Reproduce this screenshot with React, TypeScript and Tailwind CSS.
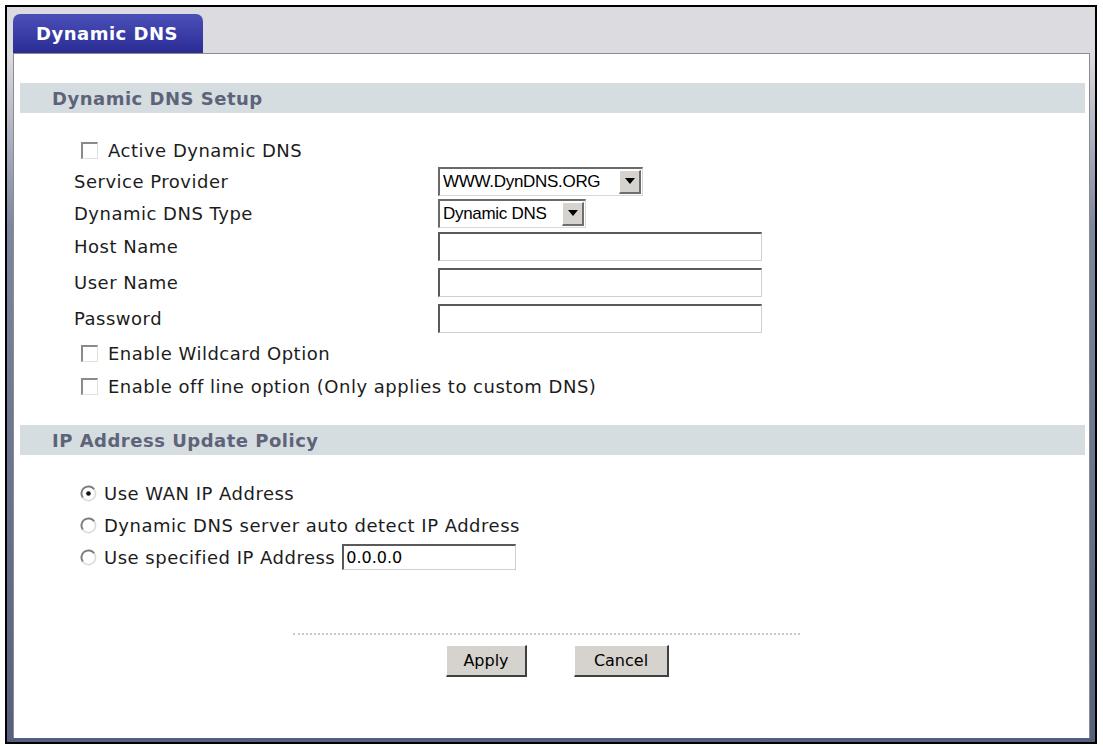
import { useState } from 'react'

const labelFont = "font-['DejaVu_Sans','Verdana',sans-serif]"
const arialFont = "font-['Liberation_Sans','Arial',sans-serif]"

function Check({ checked, onChange }: { checked: boolean; onChange: () => void }) {
  return (
    <button
      type="button"
      onClick={onChange}
      className="flex h-[17px] w-[17px] shrink-0 items-center justify-center border-t-2 border-l-2 border-b border-r border-t-[#8a8a8a] border-l-[#8a8a8a] border-b-[#e0e0e0] border-r-[#e0e0e0] bg-white"
    >
      {checked && <span className="text-[13px] leading-none text-black">✓</span>}
    </button>
  )
}

function Radio({ checked, onChange }: { checked: boolean; onChange: () => void }) {
  return (
    <button type="button" onClick={onChange} className="h-[17px] w-[17px] shrink-0">
      <svg width="17" height="17" viewBox="0 0 17 17">
        <path d="M14.2 4.3A7 7 0 0 0 2.8 12.7" fill="none" stroke="#7c7c7c" strokeWidth="2" />
        <path d="M2.8 12.7A7 7 0 0 0 14.2 4.3" fill="none" stroke="#dadada" strokeWidth="1.6" />
        <circle cx="8.5" cy="8.5" r="5.6" fill="#fff" />
        {checked && <circle cx="8.5" cy="8.5" r="2.3" fill="#111" />}
      </svg>
    </button>
  )
}

function SelectBox({ value, width }: { value: string; width: string }) {
  return (
    <div
      className={`flex h-[29px] items-stretch border-t-2 border-l-2 border-b border-r border-t-[#6a6a6a] border-l-[#6a6a6a] border-b-[#d8d8d8] border-r-[#d8d8d8] bg-white ${width}`}
    >
      <span className={`flex-1 pl-[3px] text-[17px] leading-[26px] tracking-[-0.3px] text-black ${arialFont}`}>{value}</span>
      <span className="m-[1px] flex w-[22px] items-center justify-center border-t border-l border-b-2 border-r-2 border-t-white border-l-white border-b-[#6e6e6e] border-r-[#6e6e6e] bg-[#d6d3ce]">
        <svg width="10" height="6" viewBox="0 0 10 6">
          <path d="M0 0h10L5 6z" fill="#000" />
        </svg>
      </span>
    </div>
  )
}

function TextBox({ value, onChange, width }: { value: string; onChange: (v: string) => void; width: string }) {
  return (
    <input
      value={value}
      onChange={e => onChange(e.target.value)}
      className={`h-[29px] border-t-2 border-l-2 border-b border-r border-t-[#5a5a5a] border-l-[#5a5a5a] border-b-[#d0d0d0] border-r-[#d0d0d0] bg-white px-[2px] text-[16px] text-black outline-none ${labelFont} ${width}`}
    />
  )
}

function SectionBar({ title }: { title: string }) {
  return (
    <div className="ml-[6px] mr-[4px] flex h-[30px] items-center bg-[#d6dde0] pl-[32px]">
      <span className={`text-[18px] font-bold tracking-[0.5px] text-[#5d6479] ${labelFont}`}>{title}</span>
    </div>
  )
}

export default function App() {
  const [active, setActive] = useState(false)
  const [wildcard, setWildcard] = useState(false)
  const [offline, setOffline] = useState(false)
  const [host, setHost] = useState('')
  const [user, setUser] = useState('')
  const [pass, setPass] = useState('')
  const [policy, setPolicy] = useState('wan')
  const [ip, setIp] = useState('0.0.0.0')

  const rowLabel = `text-[18px] tracking-[0.5px] text-[#1c1c1c] ${labelFont}`

  return (
    <div className="h-[748px] w-[1103px] bg-white pl-[5px] pt-[5px]">
      <div className="flex h-[739px] w-[1092px] flex-col border-2 border-black bg-gradient-to-b from-[#dddce0] from-[6%] via-[#7d869f] via-[30%] to-[#56607e]">
        {/* tab strip */}
        <div className="flex h-[46px] shrink-0 items-end bg-[#dcdbdf] pl-[6px]">
          <div className="flex h-[39px] w-[190px] items-center rounded-t-[7px] bg-gradient-to-b from-[#4b4fb8] to-[#2a2c94] pl-[23px]">
            <span className={`text-[18px] font-bold tracking-[0.5px] text-white ${labelFont}`}>Dynamic DNS</span>
          </div>
        </div>

        {/* panel */}
        <div className="mb-[4px] ml-[6px] mr-[5px] flex flex-1 flex-col border-x border-t border-[#8c8c8c] bg-white pt-[29px]">
          <SectionBar title="Dynamic DNS Setup" />

          <div className="mt-[22px] flex flex-col pl-[60px]">
            <div className="flex h-[30px] items-center gap-[10px] pl-[7px]">
              <Check checked={active} onChange={() => setActive(!active)} />
              <span className={rowLabel}>Active Dynamic DNS</span>
            </div>
            <div className="flex h-[32px] items-center">
              <span className={`w-[364px] ${rowLabel}`}>Service Provider</span>
              <SelectBox value="WWW.DynDNS.ORG" width="w-[205px]" />
            </div>
            <div className="flex h-[32px] items-center">
              <span className={`w-[364px] ${rowLabel}`}>Dynamic DNS Type</span>
              <SelectBox value="Dynamic DNS" width="w-[148px]" />
            </div>
            <div className="flex h-[35px] items-center">
              <span className={`w-[364px] ${rowLabel}`}>Host Name</span>
              <TextBox value={host} onChange={setHost} width="w-[324px]" />
            </div>
            <div className="flex h-[36px] items-center">
              <span className={`w-[364px] ${rowLabel}`}>User Name</span>
              <TextBox value={user} onChange={setUser} width="w-[324px]" />
            </div>
            <div className="flex h-[36px] items-center">
              <span className={`w-[364px] ${rowLabel}`}>Password</span>
              <TextBox value={pass} onChange={setPass} width="w-[324px]" />
            </div>
            <div className="flex h-[35px] items-center gap-[10px] pl-[7px]">
              <Check checked={wildcard} onChange={() => setWildcard(!wildcard)} />
              <span className={rowLabel}>Enable Wildcard Option</span>
            </div>
            <div className="flex h-[31px] items-center gap-[10px] pl-[7px]">
              <Check checked={offline} onChange={() => setOffline(!offline)} />
              <span className={rowLabel}>Enable off line option (Only applies to custom DNS)</span>
            </div>
          </div>

          <div className="mt-[23px]">
            <SectionBar title="IP Address Update Policy" />
          </div>

          <div className="mt-[22px] flex flex-col pl-[66px]">
            <div className="flex h-[32px] items-center gap-[7px]">
              <Radio checked={policy === 'wan'} onChange={() => setPolicy('wan')} />
              <span className={rowLabel}>Use WAN IP Address</span>
            </div>
            <div className="flex h-[32px] items-center gap-[7px]">
              <Radio checked={policy === 'auto'} onChange={() => setPolicy('auto')} />
              <span className={rowLabel}>Dynamic DNS server auto detect IP Address</span>
            </div>
            <div className="flex h-[32px] items-center gap-[7px]">
              <Radio checked={policy === 'spec'} onChange={() => setPolicy('spec')} />
              <span className={rowLabel}>Use specified IP Address</span>
              <TextBox value={ip} onChange={setIp} width="w-[174px] !h-[26px]" />
            </div>
          </div>

          <div className="mt-[60px] flex flex-col items-center pr-[10px]">
            <div className="w-[507px] border-t-2 border-dotted border-[#c8c8c8]" />
            <div className="mt-[10px] flex gap-[47px] pl-[22px]">
              <button
                type="button"
                className={`h-[32px] w-[81px] border-t border-l border-b-2 border-r-2 border-t-white border-l-white border-b-[#404040] border-r-[#404040] bg-[#d6d3ce] text-[16px] text-black ${labelFont}`}
              >
                Apply
              </button>
              <button
                type="button"
                className={`h-[32px] w-[95px] border-t border-l border-b-2 border-r-2 border-t-white border-l-white border-b-[#404040] border-r-[#404040] bg-[#d6d3ce] text-[16px] text-black ${labelFont}`}
              >
                Cancel
              </button>
            </div>
          </div>
        </div>
      </div>
    </div>
  )
}
